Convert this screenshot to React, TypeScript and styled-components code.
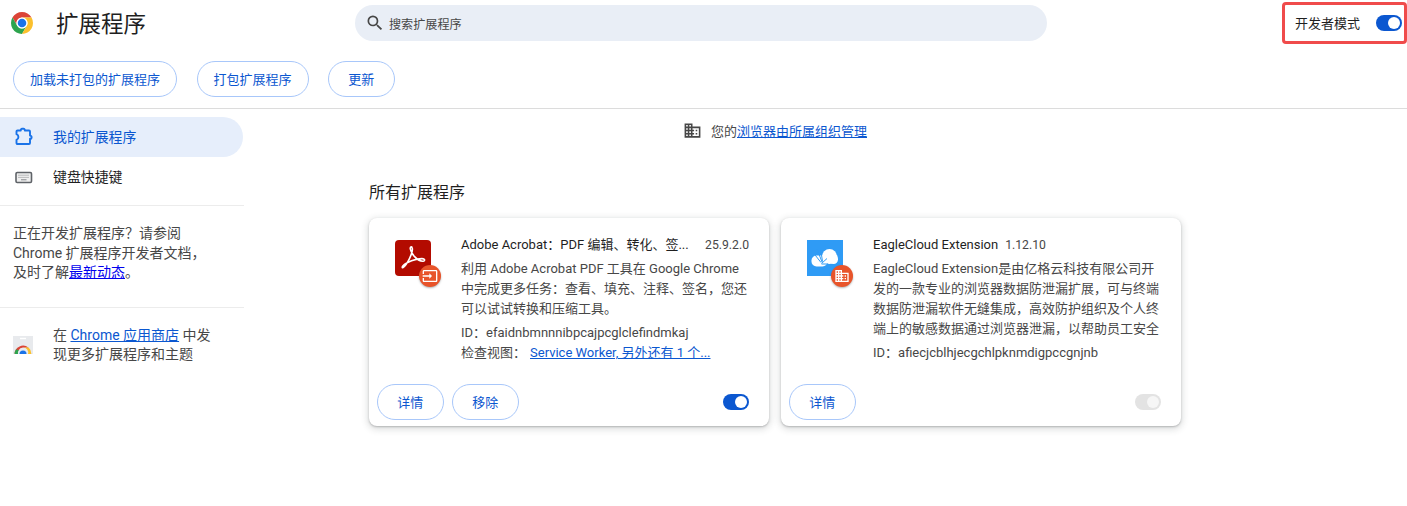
import React from "react";
import styled, { createGlobalStyle } from "styled-components";
import { MdBusiness, MdInput, MdSearch } from "react-icons/md";

const GlobalStyle = createGlobalStyle`
  html, body {
    margin: 0;
    padding: 0;
    background: #fff;
    overflow: hidden;
  }
  body {
    font-family: Roboto, "Noto Sans CJK SC", sans-serif;
    font-size: 13px;
    color: #1f1f1f;
  }
`;

const Page = styled.div`
  width: 1407px;
  height: 506px;
  display: flex;
  flex-direction: column;
`;

const Header = styled.header`
  height: 45px;
  display: flex;
  align-items: center;
`;

const Brand = styled.div`
  width: 355px;
  display: flex;
  align-items: center;
  gap: 23px;
  padding-left: 11px;
  box-sizing: border-box;
  margin-top: 1px;
`;

const Title = styled.h1`
  margin: 0;
  padding-top: 1px;
  font-size: 22.5px;
  line-height: 28px;
  font-weight: 400;
`;

const SearchBar = styled.div`
  width: 692px;
  height: 36px;
  margin-top: 1px;
  border-radius: 18px;
  background: #e9eef6;
  display: flex;
  align-items: center;
  gap: 4px;
  padding-left: 10px;
  box-sizing: border-box;
  font-size: 12.1px;
  color: #474747;
  svg {
    font-size: 20px;
    color: #474747;
  }
`;

const DevMode = styled.div`
  margin-left: auto;
  width: 125px;
  height: 42px;
  box-sizing: border-box;
  border: 3px solid #f04b4b;
  border-radius: 4px;
  display: flex;
  align-items: center;
  justify-content: space-between;
  padding: 0 2px 0 10px;
  color: #1f1f1f;
`;

const Toggle = styled.span<{ $disabled?: boolean }>`
  position: relative;
  display: block;
  width: 26px;
  height: 16px;
  border-radius: 8px;
  background: ${({ $disabled }) => ($disabled ? "#e3e3e3" : "#0b57d0")};
  &::after {
    content: "";
    position: absolute;
    right: 2px;
    top: 2px;
    width: 12px;
    height: 12px;
    border-radius: 50%;
    background: ${({ $disabled }) => ($disabled ? "#f6f6f6" : "#fff")};
  }
`;

const Toolbar = styled.div`
  height: 64px;
  box-sizing: border-box;
  border-bottom: 1px solid #dcdcdc;
  padding: 16px 0 0 13px;
  display: flex;
  align-items: flex-start;
  gap: 19.5px;
`;

const PillButton = styled.button`
  height: 36px;
  min-width: 66.5px;
  padding: 0 16px 1px;
  border: 1px solid #a8c7fa;
  border-radius: 18px;
  background: #fff;
  color: #0b57d0;
  font: inherit;
  white-space: nowrap;
`;

const Body = styled.div`
  flex: 1;
  display: flex;
`;

const Sidebar = styled.nav`
  width: 244px;
  flex: none;
  padding-top: 8px;
  font-size: 14px;
`;

const NavItem = styled.div<{ $active?: boolean }>`
  width: 243px;
  height: 40px;
  box-sizing: border-box;
  padding-left: 15px;
  display: flex;
  align-items: center;
  gap: 20px;
  border-radius: 0 20px 20px 0;
  background: ${({ $active }) => ($active ? "#e6eefb" : "transparent")};
  color: ${({ $active }) => ($active ? "#0b57d0" : "#1f1f1f")};
`;

const NavLabel = styled.span`
  font-size: 13.9px;
  margin-bottom: 2px;
`;

const Divider = styled.hr`
  width: 244px;
  margin: 0;
  border: 0;
  border-top: 1px solid #ececec;
`;

const NavDivider = styled(Divider)`
  margin-top: 8px;
`;

const Note = styled.p`
  margin: 0;
  height: 101px;
  box-sizing: border-box;
  padding: 18px 0 0 13px;
  line-height: 19.5px;
  color: #474747;
  white-space: nowrap;
`;

const PlainLink = styled.a`
  color: #0000ee;
  text-decoration: underline;
`;

const StoreRow = styled.div`
  display: flex;
  align-items: center;
  gap: 20px;
  padding: 18px 0 0 13px;
  line-height: 19px;
  color: #474747;
  white-space: nowrap;
`;

const Link = styled.a`
  color: #0b57d0;
  text-decoration: underline;
`;

const Main = styled.main`
  width: 812px;
  margin-left: 125px;
`;

const Banner = styled.div`
  height: 43px;
  display: flex;
  align-items: center;
  justify-content: center;
  gap: 9px;
  color: #474747;
  svg {
    font-size: 19px;
    color: #474747;
  }
`;

const SectionTitle = styled.h2`
  margin: 29px 0 13px;
  font-size: 16px;
  line-height: 24px;
  font-weight: 400;
  color: #1f1f1f;
`;

const CardGrid = styled.div`
  display: grid;
  grid-template-columns: 400px 400px;
  gap: 12px;
`;

const Card = styled.article`
  height: 208px;
  box-sizing: border-box;
  border-radius: 8px;
  background: #fff;
  box-shadow: 0 1px 2px rgba(60, 64, 67, 0.3), 0 2px 6px 2px rgba(60, 64, 67, 0.15);
  display: flex;
  flex-direction: column;
`;

const CardBody = styled.div`
  flex: 1;
  display: flex;
  padding: 16px 20px 0 26px;
`;

const IconBox = styled.div`
  position: relative;
  width: 36px;
  height: 36px;
  margin: 6px 30px 0 0;
  flex: none;
`;

const Badge = styled.span`
  position: absolute;
  left: 24px;
  top: 25px;
  width: 22px;
  height: 22px;
  border-radius: 50%;
  background: #e8542a;
  color: #fff;
  display: flex;
  align-items: center;
  justify-content: center;
  box-shadow: 0 1px 2px rgba(60, 64, 67, 0.4);
  svg {
    font-size: 16px;
  }
`;

const CardText = styled.div`
  flex: 1;
  min-width: 0;
  padding-top: 1px;
  white-space: nowrap;
`;

const NameRow = styled.div`
  height: 20px;
  line-height: 20px;
  display: flex;
  gap: 7px;
`;

const Version = styled.span<{ $right?: boolean }>`
  color: #474747;
  font-size: 12.2px;
  margin-left: ${({ $right }) => ($right ? "auto" : "0")};
`;

const Description = styled.div`
  margin-top: 4px;
  line-height: 20px;
  color: #474747;
`;

const MetaLine = styled.div`
  line-height: 20px;
  color: #474747;
`;

const Meta = styled.div`
  margin-top: 4px;
`;

const ViewLink = styled(Link)`
  margin-left: 4px;
`;

const CardFooter = styled.div`
  height: 41px;
  padding: 0 20px 0 8px;
  margin-bottom: 4px;
  display: flex;
  align-items: center;
  gap: 8.5px;
`;

const FooterToggle = styled.div`
  margin-left: auto;
`;

const ChromeLogo = () => (
  <svg width="22" height="22" viewBox="2 2 44 44" aria-hidden>
    <path d="M4.95 13A22 22 0 0 1 43.05 13H24A11 11 0 0 0 14.47 29.5Z" fill="#db4437" />
    <path d="M4.95 13A22 22 0 0 0 24 46L33.53 29.5A11 11 0 0 1 14.47 29.5Z" fill="#2da44e" />
    <path d="M24 46A22 22 0 0 0 43.05 13H24A11 11 0 0 1 33.53 29.5Z" fill="#fbc02d" />
    <circle cx="24" cy="24" r="11" fill="#fff" />
    <circle cx="24" cy="24" r="8.5" fill="#1a73e8" />
  </svg>
);

const ExtensionIcon = () => (
  <svg width="18" height="20" viewBox="0 0 18 20" fill="none" aria-hidden>
    <path
      d="M2.5 3.5H5.8V3a1.2 1.2 0 0 1 1.2-1.2h1.6A1.2 1.2 0 0 1 9.8 3v.5H14a1 1 0 0 1 1 1V8.6a1.6 1.6 0 0 1 0 3.2V16a1 1 0 0 1-1 1H2.5a1 1 0 0 1-1-1V12.8a3 3 0 0 0 0-5.6V4.5a1 1 0 0 1 1-1Z"
      stroke="#1a73e8"
      strokeWidth="1.9"
      strokeLinejoin="round"
    />
  </svg>
);

const KeyboardIcon = () => (
  <svg width="18" height="20" viewBox="0 0 18 20" aria-hidden>
    <rect x="1" y="5.5" width="15.5" height="10" rx="1.2" fill="#efefef" stroke="#5f6368" strokeWidth="1.6" />
    <path d="M3.5 8.2h10.5M3.5 10.4h10.5" stroke="#84878a" strokeWidth="1" strokeDasharray="1 1" />
    <path d="M6 12.8h5.5" stroke="#84878a" strokeWidth="1" />
  </svg>
);

const StoreIcon = () => (
  <svg width="20" height="20" viewBox="0 0 20 20" aria-hidden>
    <path d="M0 1h20v18H0z" fill="#e8eaed" />
    <path d="M7 3.5h6" stroke="#fff" strokeWidth="1.4" />
    <path d="M1.6 19a8.4 8.4 0 0 1 14-6.2L10 12.5a5 5 0 0 0-4.4 2.8Z" fill="#db4437" />
    <path d="M1.6 19a8 8 0 0 1 1.4-4.6L5.8 15a5 5 0 0 0-.8 4Z" fill="#2da44e" />
    <path d="M10 12.5h5.6a8.4 8.4 0 0 1 2.8 6.5H15a5 5 0 0 0-5-6.5Z" fill="#fbc02d" />
    <path d="M6.5 19a3.5 3.5 0 0 1 7 0Z" fill="#1a73e8" />
  </svg>
);

const AcrobatIcon = () => (
  <svg width="36" height="36" viewBox="0 0 36 36" aria-hidden>
    <rect width="36" height="36" rx="4" fill="#b30b00" />
    <path
      d="M8 27.5C12 25 18.5 12 17.2 8C16.6 6 15 6.8 15.3 9C16 13.5 22.5 21.5 28 21.2C30.5 21 30 18.6 27 18.6C21 18.6 11.5 22 8 25.8C6.8 27.2 7.2 28 8 27.5Z"
      fill="none"
      stroke="#fff"
      strokeWidth="1.6"
      strokeLinejoin="round"
    />
  </svg>
);

const EagleCloudIcon = () => (
  <svg width="36" height="36" viewBox="0 0 36 36" aria-hidden>
    <rect width="36" height="36" fill="#2f9bf5" />
    <circle cx="22.5" cy="16.5" r="7.5" fill="#fff" />
    <rect x="22" y="14" width="9" height="10" rx="4.5" fill="#fff" />
    <rect x="4.5" y="15.5" width="16" height="11" rx="5" fill="#fff" />
    <path
      d="M15 22L10 9M15.5 21.5L13.5 8.5M14 22.5L6.5 13M14.5 23.5L20 18.5M14.5 24H21"
      stroke="#2f9bf5"
      strokeWidth="1"
    />
  </svg>
);

export default function App() {
  return (
    <Page>
      <GlobalStyle />
      <Header>
        <Brand>
          <ChromeLogo />
          <Title>扩展程序</Title>
        </Brand>
        <SearchBar>
          <MdSearch />
          搜索扩展程序
        </SearchBar>
        <DevMode>
          开发者模式
          <Toggle />
        </DevMode>
      </Header>
      <Toolbar>
        <PillButton>加载未打包的扩展程序</PillButton>
        <PillButton>打包扩展程序</PillButton>
        <PillButton>更新</PillButton>
      </Toolbar>
      <Body>
        <Sidebar>
          <NavItem $active>
            <ExtensionIcon />
            <NavLabel>我的扩展程序</NavLabel>
          </NavItem>
          <NavItem>
            <KeyboardIcon />
            <NavLabel>键盘快捷键</NavLabel>
          </NavItem>
          <NavDivider />
          <Note>
            正在开发扩展程序？请参阅
            <br />
            Chrome 扩展程序开发者文档，
            <br />
            及时了解<PlainLink href="#">最新动态</PlainLink>。
          </Note>
          <Divider />
          <StoreRow>
            <StoreIcon />
            <div>
              在 <Link href="#">Chrome 应用商店</Link> 中发
              <br />
              现更多扩展程序和主题
            </div>
          </StoreRow>
        </Sidebar>
        <Main>
          <Banner>
            <MdBusiness />
            <span>
              您的<Link href="#">浏览器由所属组织管理</Link>
            </span>
          </Banner>
          <SectionTitle>所有扩展程序</SectionTitle>
          <CardGrid>
            <Card>
              <CardBody>
                <IconBox>
                  <AcrobatIcon />
                  <Badge>
                    <MdInput />
                  </Badge>
                </IconBox>
                <CardText>
                  <NameRow>
                    <span>Adobe Acrobat：PDF 编辑、转化、签...</span>
                    <Version $right>25.9.2.0</Version>
                  </NameRow>
                  <Description>
                    利用 Adobe Acrobat PDF 工具在 Google Chrome
                    <br />
                    中完成更多任务：查看、填充、注释、签名，您还
                    <br />
                    可以试试转换和压缩工具。
                  </Description>
                  <Meta>
                    <MetaLine>ID：efaidnbmnnnibpcajpcglclefindmkaj</MetaLine>
                    <MetaLine>
                      检查视图：<ViewLink href="#">Service Worker, 另外还有 1 个...</ViewLink>
                    </MetaLine>
                  </Meta>
                </CardText>
              </CardBody>
              <CardFooter>
                <PillButton>详情</PillButton>
                <PillButton>移除</PillButton>
                <FooterToggle>
                  <Toggle />
                </FooterToggle>
              </CardFooter>
            </Card>
            <Card>
              <CardBody>
                <IconBox>
                  <EagleCloudIcon />
                  <Badge>
                    <MdBusiness />
                  </Badge>
                </IconBox>
                <CardText>
                  <NameRow>
                    <span>EagleCloud Extension</span>
                    <Version>1.12.10</Version>
                  </NameRow>
                  <Description>
                    EagleCloud Extension是由亿格云科技有限公司开
                    <br />
                    发的一款专业的浏览器数据防泄漏扩展，可与终端
                    <br />
                    数据防泄漏软件无缝集成，高效防护组织及个人终
                    <br />
                    端上的敏感数据通过浏览器泄漏，以帮助员工安全
                  </Description>
                  <Meta>
                    <MetaLine>ID：afiecjcblhjecgchlpknmdigpccgnjnb</MetaLine>
                  </Meta>
                </CardText>
              </CardBody>
              <CardFooter>
                <PillButton>详情</PillButton>
                <FooterToggle>
                  <Toggle $disabled />
                </FooterToggle>
              </CardFooter>
            </Card>
          </CardGrid>
        </Main>
      </Body>
    </Page>
  );
}
